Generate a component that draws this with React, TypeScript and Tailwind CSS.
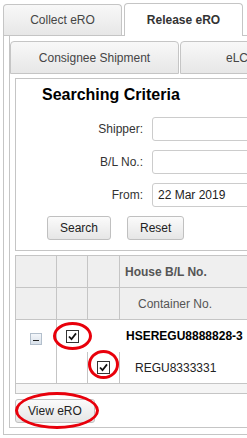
import React from "react";

const border = "border-[#c5c5c5]";

function CheckBox() {
  return (
    <svg width="13" height="13" viewBox="0 0 13 13" className="block">
      <rect x="0.5" y="0.5" width="12" height="12" fill="#fff" stroke="#333" />
      <path d="M3 6.5 L5.5 9.2 L10 3.4" fill="none" stroke="#111" strokeWidth="1.8" />
    </svg>
  );
}

function Btn({ label }: { label: string }) {
  return (
    <div className="h-[24px] px-[12px] flex items-center border border-[#c0c0c0] rounded-[3px] bg-linear-to-b from-[#fbfbfb] to-[#e6e6e6] text-[#222]">
      {label}
    </div>
  );
}

function Field({ label, value }: { label: string; value?: string }) {
  return (
    <div className="flex items-center gap-[9px]">
      <div className="w-[127px] shrink-0 text-right text-[#333]">{label}</div>
      <div className="h-[24px] w-[170px] shrink-0 px-[5px] flex items-center border border-[#cccccc] rounded-[3px] bg-white text-[#222]">
        {value}
      </div>
    </div>
  );
}

function Ring({ className }: { className: string }) {
  return (
    <div
      className={`absolute rounded-[50%] border-[3px] border-[#e8000b] pointer-events-none ${className}`}
    />
  );
}

export default function App() {
  return (
    <div className="relative w-[247px] h-[438px] overflow-hidden bg-white font-['Liberation_Sans',Arial,sans-serif] text-[12px] text-[#333]">
      <div className="w-[400px] pt-[3px] pl-[3px]">
        {/* outer tabs */}
        <div className="flex items-end gap-[2px] h-[32px]">
          <div
            className={`w-[119px] shrink-0 h-[31px] flex items-center justify-center border border-b-0 ${border} rounded-t-[4px] bg-linear-to-b from-[#f8f8f8] to-[#e7e7e7] text-[#454545]`}
          >
            Collect eRO
          </div>
          <div
            className={`relative z-10 -mb-px w-[119px] shrink-0 h-[33px] flex items-center justify-center border border-b-0 ${border} rounded-t-[4px] bg-white font-bold text-[#333]`}
          >
            Release eRO
          </div>
        </div>

        {/* outer panel */}
        <div className={`border ${border} pl-[5px] pb-[6px]`}>
          <div className={`border-l border-b ${border} pt-[5px] pb-[4px]`}>
            {/* inner tabs */}
            <div className="flex items-end gap-[1px]">
              <div
                className={`w-[169px] shrink-0 h-[33px] flex items-center justify-center border ${border} rounded-t-[4px] bg-linear-to-b from-[#f8f8f8] to-[#e7e7e7] text-[#454545]`}
              >
                Consignee Shipment
              </div>
              <div
                className={`w-[169px] shrink-0 h-[33px] flex items-center pl-[45px] border ${border} rounded-t-[4px] bg-linear-to-b from-[#f8f8f8] to-[#e7e7e7] text-[#454545]`}
              >
                eLC Shipment
              </div>
            </div>

            <div className="pl-[5px] pt-[4px]">
              {/* searching criteria */}
              <div className={`w-[320px] border ${border} pb-[10px]`}>
                <div className="pl-[26px] pt-[7px] text-[16px] leading-[18px] font-bold text-black">
                  Searching Criteria
                </div>
                <div className="mt-[13px] flex flex-col gap-[9px]">
                  <Field label="Shipper:" />
                  <Field label="B/L No.:" />
                  <Field label="From:" value="22 Mar 2019" />
                </div>
                <div className="mt-[9px] pl-[31px] flex gap-[16px]">
                  <Btn label="Search" />
                  <Btn label="Reset" />
                </div>
              </div>

              {/* grid */}
              <div className={`mt-[4px] w-[320px] border-l border-t ${border}`}>
                <div className="grid grid-cols-[41px_31px_32px_1fr] bg-[#efefef]">
                  <div className={`h-[32px] border-r border-b ${border}`} />
                  <div className={`h-[32px] border-r border-b ${border}`} />
                  <div className={`h-[32px] border-r border-b ${border}`} />
                  <div className={`h-[32px] border-r border-b ${border} pl-[5px] flex items-center font-bold text-[#555]`}>
                    House B/L No.
                  </div>
                  <div className={`h-[32px] border-r border-b ${border}`} />
                  <div className={`h-[32px] border-r border-b ${border}`} />
                  <div className={`h-[32px] border-r border-b ${border}`} />
                  <div className={`h-[32px] border-r border-b ${border} pl-[18px] flex items-center text-[#555]`}>
                    Container No.
                  </div>
                </div>
                <div className="grid grid-cols-[41px_31px_32px_1fr] grid-rows-[32px_31px]">
                  <div className={`row-span-2 border-r ${border} flex justify-center pt-[13px]`}>
                    <div className="w-[12px] h-[12px] border border-[#b3bfcc] bg-linear-to-b from-[#f3f6fa] to-[#d9e1ea] flex items-center justify-center">
                      <div className="w-[6px] h-[1px] bg-[#222] mt-[2px]" />
                    </div>
                  </div>
                  <div className="flex items-center justify-center">
                    <CheckBox />
                  </div>
                  <div />
                  <div className="pl-[6px] flex items-center font-bold text-black">HSEREGU8888828-3</div>
                  <div className={`border-r ${border}`} />
                  <div className={`border-r ${border} flex items-center justify-center`}>
                    <CheckBox />
                  </div>
                  <div className="pl-[15px] flex items-center text-[#222]">REGU8333331</div>
                </div>
                <div className={`h-[11px] border-t border-b ${border} bg-[#f5f5f5]`} />
              </div>

              <div className="mt-[5px] flex">
                <Btn label="View eRO" />
              </div>
            </div>
          </div>
        </div>
      </div>

      <Ring className="left-[53px] top-[322px] w-[39px] h-[28px]" />
      <Ring className="left-[88px] top-[350px] w-[31px] h-[29px]" />
      <Ring className="left-[15px] top-[392px] w-[84px] h-[37px]" />
    </div>
  );
}
